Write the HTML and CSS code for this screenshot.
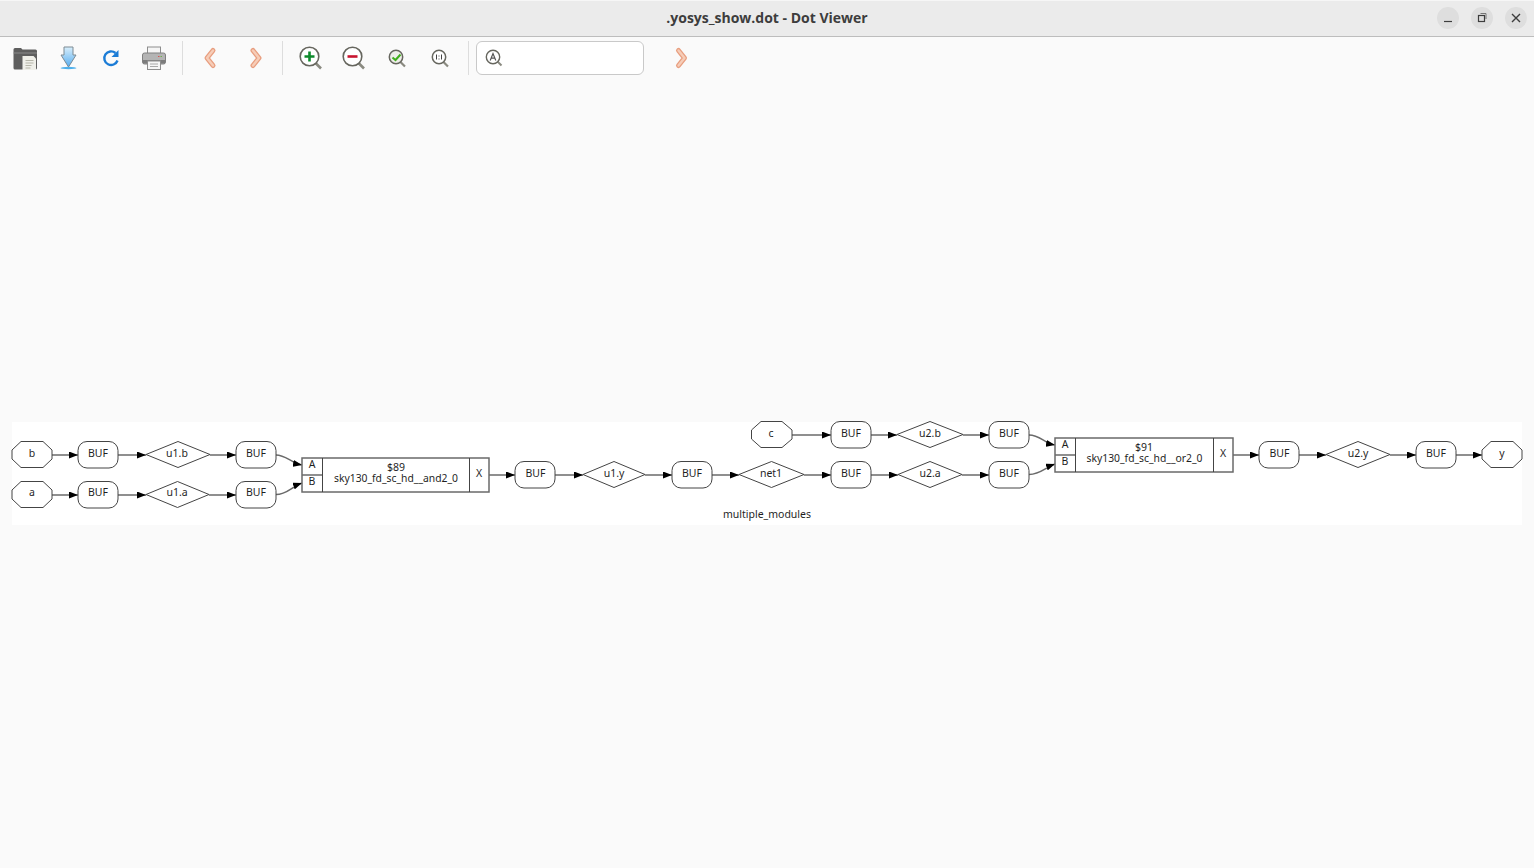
FILE: index.html
```html
<!DOCTYPE html>
<html lang="en">
<head>
    <meta charset="UTF-8">
    <title>.yosys_show.dot - Dot Viewer</title>
    <link rel="stylesheet" href="styles.css">
</head>
<body>
    <!-- Title bar -->
    <header class="titlebar">
        <div class="title">.yosys_show.dot - Dot Viewer</div>
        <div class="window-buttons">
            <button class="win-btn">
                <svg width="12" height="12" viewBox="0 0 12 12"><path d="M2 9.500h8" stroke="#3d3d3d" stroke-width="1.200"/></svg>
            </button>
            <button class="win-btn">
                <svg width="12" height="12" viewBox="0 0 12 12" fill="none"><rect x="2.500" y="3.500" width="6" height="6" stroke="#3d3d3d" stroke-width="1.200"/><path d="M4.500 1.500h5.500v5.500" stroke="#777" stroke-width="1"/></svg>
            </button>
            <button class="win-btn">
                <svg width="12" height="12" viewBox="0 0 12 12"><path d="M2 2l8 8M10 2l-8 8" stroke="#3d3d3d" stroke-width="1.400"/></svg>
            </button>
        </div>
    </header>

    <!-- Toolbar -->
    <div class="toolbar">
        <button class="tool">
            <svg width="24" height="24" viewBox="0 0 24 24">
                <path d="M0.500 3.500q0-1.500 1.500-1.500h6l1.500 1.500h13q1.500 0 1.500 1.500v17q0 1.500-1.500 1.500h-20.500q-1.500 0-1.500-1.500z" fill="#5e5e5e"/>
                <path d="M0.500 7h24" stroke="#8a8a8a" stroke-width="1"/>
                <path d="M9.500 10h11l2.500 2.500v11.500h-13.500z" fill="#efefe9"/>
                <path d="M12.500 14.500h8M12.500 17h8M12.500 19.500h6M12.500 22h5" stroke="#b5b5a8" stroke-width="1"/>
            </svg>
        </button>
        <button class="tool">
            <svg width="24" height="24" viewBox="0 0 24 24">
                <defs>
                    <linearGradient id="saveBlue" x1="0" y1="0" x2="0" y2="1">
                        <stop offset="0" stop-color="#d8eefb"/>
                        <stop offset="1" stop-color="#56adf0"/>
                    </linearGradient>
                </defs>
                <ellipse cx="12.500" cy="22" rx="8" ry="1.200" fill="#4fb0ec"/>
                <path d="M8 1h9v8h3l-7.500 12-7.500-12h3z" fill="url(#saveBlue)" stroke="#7d8b94" stroke-width="1"/>
            </svg>
        </button>
        <button class="tool">
            <svg width="24" height="24" viewBox="0 0 24 24" fill="none">
                <path d="M18.500 14.500a6.800 6.800 0 1 1-2-7.500" stroke="#1b7cd6" stroke-width="2.400"/>
                <path d="M19.500 4v7h-7z" fill="#1b7cd6"/>
            </svg>
        </button>
        <button class="tool">
            <svg width="24" height="24" viewBox="0 0 24 24">
                <rect x="5.500" y="1" width="13" height="8" fill="#f5f5f5" stroke="#8d8d8d"/>
                <rect x="0.500" y="7" width="23" height="11" rx="2" fill="#b4b4b4" stroke="#808080"/>
                <path d="M1 14h22v3.500H1z" fill="#7c7c7c"/>
                <path d="M16 10.500h1.500" stroke="#d9534f" stroke-width="1"/>
                <path d="M18.500 10.500h1.500" stroke="#6fae4c" stroke-width="1"/>
                <rect x="5.500" y="15" width="13" height="8.500" fill="#f5f5f5" stroke="#8d8d8d"/>
                <path d="M8 18h8M8 20.500h8" stroke="#a8a8a8" stroke-width="1"/>
            </svg>
        </button>
        <span class="sep"></span>
        <button class="tool tool-back">
            <svg width="24" height="24" viewBox="0 0 24 24" fill="none">
                <path d="M14 4.500l-6 7.500 6 7.500" stroke="#e89e7f" stroke-width="5" stroke-linecap="round" stroke-linejoin="round"/>
                <path d="M14 4.500l-6 7.500 6 7.500" stroke="#f6cdb8" stroke-width="2.400" stroke-linecap="round" stroke-linejoin="round"/>
            </svg>
        </button>
        <button class="tool">
            <svg width="24" height="24" viewBox="0 0 24 24" fill="none">
                <path d="M11 4.500l6 7.500-6 7.500" stroke="#e89e7f" stroke-width="5" stroke-linecap="round" stroke-linejoin="round"/>
                <path d="M11 4.500l6 7.500-6 7.500" stroke="#f6cdb8" stroke-width="2.400" stroke-linecap="round" stroke-linejoin="round"/>
            </svg>
        </button>
        <span class="sep sep-zoom"></span>
        <button class="tool">
            <svg width="24" height="24" viewBox="0 0 24 24" fill="none">
                <path d="M16.500 17l5.500 5.500" stroke="#8a8a80" stroke-width="2.600"/>
                <circle cx="10.500" cy="10.500" r="9.300" fill="#fff" stroke="#66665e" stroke-width="1.600"/>
                <path d="M10.500 5.500v10M5.500 10.500h10" stroke="#0e8a2c" stroke-width="2.600"/>
            </svg>
        </button>
        <button class="tool">
            <svg width="24" height="24" viewBox="0 0 24 24" fill="none">
                <path d="M16.500 17l5.500 5.500" stroke="#8a8a80" stroke-width="2.600"/>
                <circle cx="10.500" cy="10.500" r="9.300" fill="#fff" stroke="#66665e" stroke-width="1.600"/>
                <path d="M5.500 10.500h10" stroke="#c8142f" stroke-width="2.600"/>
            </svg>
        </button>
        <button class="tool">
            <svg width="24" height="24" viewBox="0 0 24 24" fill="none">
                <path d="M15.500 16l4.500 4.500" stroke="#8a8a80" stroke-width="2.200"/>
                <circle cx="11" cy="11" r="6.700" fill="#eeeee8" stroke="#66665e" stroke-width="1.500"/>
                <path d="M7.500 11.500l3 2.500 5-5.500" stroke="#3fae1c" stroke-width="2"/>
            </svg>
        </button>
        <button class="tool">
            <svg width="24" height="24" viewBox="0 0 24 24" fill="none">
                <path d="M15.500 16l4.500 4.500" stroke="#8a8a80" stroke-width="2.200"/>
                <circle cx="11" cy="11" r="6.700" fill="#fff" stroke="#66665e" stroke-width="1.500"/>
                <path d="M8.500 8.500v5M13.500 8.500v5M11 9.500v1M11 12.500v1" stroke="#444" stroke-width="1"/>
            </svg>
        </button>
        <span class="sep"></span>
        <div class="search">
            <svg width="18" height="18" viewBox="0 0 18 18" fill="none">
                <path d="M12.500 12.500l4 4" stroke="#8a8a80" stroke-width="2"/>
                <circle cx="8" cy="8" r="6.700" fill="#fff" stroke="#66665e" stroke-width="1.400"/>
                <path d="M5.200 11.500L8 4.500l2.800 7M6.200 9.200h3.600" stroke="#555" stroke-width="1.200"/>
            </svg>
        </div>
        <button class="tool tool-next">
            <svg width="24" height="24" viewBox="0 0 24 24" fill="none">
                <path d="M9.500 4.500l6 7.500-6 7.500" stroke="#e89e7f" stroke-width="5" stroke-linecap="round" stroke-linejoin="round"/>
                <path d="M9.500 4.500l6 7.500-6 7.500" stroke="#f6cdb8" stroke-width="2.400" stroke-linecap="round" stroke-linejoin="round"/>
            </svg>
        </button>
    </div>

    <!-- Graph -->
    <main class="canvas">
        <svg class="graph" width="1510" height="103" viewBox="12 422 1510 103">
            <defs>
                <marker id="head" markerUnits="userSpaceOnUse" markerWidth="9" markerHeight="7" refX="9" refY="3.500" orient="auto">
                    <path d="M0 0L9 3.500 0 7z" fill="#000"/>
                </marker>
            </defs>

            <!-- edges -->
            <g class="edges">
                <path d="M52 455H78"/>
                <path d="M118 455H146"/>
                <path d="M210 455H236"/>
                <path d="M276 455C286 455 291 463 302 465"/>
                <path d="M52 495H78"/>
                <path d="M118 495H146"/>
                <path d="M209 495H236"/>
                <path d="M276 494.500C287 494.500 291 487 302 483"/>
                <path d="M489 475H515"/>
                <path d="M555 475H583"/>
                <path d="M645 475H672"/>
                <path d="M712 475H739"/>
                <path d="M804 475H831"/>
                <path d="M871 475H898"/>
                <path d="M962 475H989"/>
                <path d="M1029 474.500C1041 474 1044 468 1055 464"/>
                <path d="M792 435H831"/>
                <path d="M871 435H897"/>
                <path d="M963 435H989"/>
                <path d="M1029 435C1040 435 1044 443 1055 445"/>
                <path d="M1233 455H1259"/>
                <path d="M1299 455H1326"/>
                <path d="M1390 455H1416"/>
                <path d="M1456 455H1482"/>
            </g>

            <!-- ports -->
            <g class="nodes">
                <polygon points="12,450 21,441.500 43,441.500 52,450 52,459 43,467.500 21,467.500 12,459"/>
                <polygon points="12,490 21,481.500 43,481.500 52,490 52,499 43,507.500 21,507.500 12,499"/>
                <polygon points="751.500,430 761,421.500 782,421.500 792,430 792,439 782,447.500 761,447.500 751.500,439"/>
                <polygon points="1482,450 1491,441.500 1513,441.500 1522,450 1522,459 1513,467.500 1491,467.500 1482,459"/>

                <!-- buffers -->
                <rect x="78" y="441.500" width="40" height="26.500" rx="9"/>
                <rect x="236" y="441.500" width="40" height="26.500" rx="9"/>
                <rect x="78" y="481.500" width="40" height="26.500" rx="9"/>
                <rect x="236" y="481.500" width="40" height="26.500" rx="9"/>
                <rect x="515" y="461.500" width="40" height="26.500" rx="9"/>
                <rect x="672" y="461.500" width="40" height="26.500" rx="9"/>
                <rect x="831" y="421.500" width="40" height="26.500" rx="9"/>
                <rect x="831" y="461.500" width="40" height="26.500" rx="9"/>
                <rect x="989" y="421.500" width="40" height="26.500" rx="9"/>
                <rect x="989" y="461.500" width="40" height="26.500" rx="9"/>
                <rect x="1259" y="441.500" width="40" height="26.500" rx="9"/>
                <rect x="1416" y="441.500" width="40" height="26.500" rx="9"/>

                <!-- wires -->
                <polygon points="146,454.500 178,441.500 210,454.500 178,467.500"/>
                <polygon points="146,494.500 177.500,481.500 209,494.500 177.500,507.500"/>
                <polygon points="583,474.500 614,461.500 645,474.500 614,487.500"/>
                <polygon points="739,474.500 771.500,461.500 804,474.500 771.500,487.500"/>
                <polygon points="897,434.500 930,421.500 963,434.500 930,447.500"/>
                <polygon points="898,474.500 930,461.500 962,474.500 930,487.500"/>
                <polygon points="1326,454.500 1358,441.500 1390,454.500 1358,467.500"/>
            </g>

            <!-- cells -->
            <g class="cell">
                <rect x="302" y="458" width="187" height="34"/>
                <path d="M302 475H322.500"/>
                <path class="divider" d="M322.500 458V492M469.500 458V492"/>
                <rect x="1055" y="438" width="178" height="34"/>
                <path d="M1055 455H1075.500"/>
                <path class="divider" d="M1075.500 438V472M1213.500 438V472"/>
            </g>

            <g class="labels">
                <text x="32" y="457">b</text>
                <text x="32" y="496">a</text>
                <text x="771" y="437">c</text>
                <text x="1502" y="457">y</text>
                <text x="98" y="457">BUF</text>
                <text x="256" y="457">BUF</text>
                <text x="98" y="496">BUF</text>
                <text x="256" y="496">BUF</text>
                <text x="535.500" y="477">BUF</text>
                <text x="692" y="477">BUF</text>
                <text x="851" y="437">BUF</text>
                <text x="851" y="477">BUF</text>
                <text x="1009" y="437">BUF</text>
                <text x="1009" y="477">BUF</text>
                <text x="1279.500" y="457">BUF</text>
                <text x="1436" y="457">BUF</text>
                <text x="177" y="457">u1.b</text>
                <text x="177" y="496">u1.a</text>
                <text x="614" y="477">u1.y</text>
                <text x="771" y="477">net1</text>
                <text x="930" y="437">u2.b</text>
                <text x="930" y="477">u2.a</text>
                <text x="1358" y="457">u2.y</text>
                <text x="312" y="468">A</text>
                <text x="312" y="485">B</text>
                <text x="396" y="471">$89</text>
                <text class="cell-name" x="396" y="482">sky130_fd_sc_hd__and2_0</text>
                <text x="479" y="477">X</text>
                <text x="1065" y="448">A</text>
                <text x="1065" y="465">B</text>
                <text x="1144" y="451">$91</text>
                <text class="cell-name" x="1144.500" y="462">sky130_fd_sc_hd__or2_0</text>
                <text x="1223" y="457">X</text>
                <text x="767" y="518">multiple_modules</text>
            </g>
        </svg>
    </main>
</body>
</html>
```

FILE: styles.css
```css
* {
    box-sizing: border-box;
}

html, body {
    height: 100%;
}

body {
    margin: 0;
    display: flex;
    flex-direction: column;
    background-color: #FAFAFA;
    font-family: "Open Sans", "Noto Sans", sans-serif;
    color: #3D3D3D;
    overflow: hidden;
}

button {
    border: none;
    background: none;
    padding: 0;
    display: flex;
    align-items: center;
    justify-content: center;
}

/* Title bar */
.titlebar {
    position: relative;
    flex: none;
    height: 37px;
    padding-bottom: 2px;
    background-color: #EBEBEB;
    border-top: 1px solid #F6F6F6;
    border-bottom: 1px solid #BDBDBD;
    display: flex;
    align-items: center;
    justify-content: center;
}

.title {
    font-size: 14px;
    font-weight: bold;
}

.window-buttons {
    position: absolute;
    top: 6px;
    right: 7px;
    display: flex;
    gap: 12px;
}

.win-btn {
    width: 22px;
    height: 22px;
    border-radius: 50%;
    background-color: #DEDEDE;
}

/* Toolbar */
.toolbar {
    flex: none;
    height: 42px;
    padding-left: 3px;
    display: flex;
    align-items: center;
}

.tool {
    width: 43px;
    height: 34px;
}

.tool-back {
    margin-left: -1px;
}

.sep {
    width: 1px;
    height: 34px;
    margin: 0 7px;
    background-color: #DDDDDD;
}

.sep-zoom {
    margin-right: 6px;
}

.search {
    width: 168px;
    height: 34px;
    padding-left: 8px;
    background-color: #FFFFFF;
    border: 1px solid #C9C9C9;
    border-radius: 6px;
    display: flex;
    align-items: center;
}

.tool-next {
    margin-left: 15px;
}

/* Graph */
.canvas {
    flex: 1;
    display: flex;
    align-items: center;
    justify-content: center;
}

.graph {
    display: block;
    background-color: #FFFFFF;
    overflow: visible;
}

.edges path {
    fill: none;
    stroke: #6A6A6A;
    stroke-width: 1.500;
    marker-end: url(#head);
}

.nodes polygon,
.nodes rect {
    fill: #FFFFFF;
    stroke: #444444;
    stroke-width: 1;
}

.cell rect,
.cell path {
    fill: none;
    stroke: #6A6A6A;
    stroke-width: 1.500;
}

.cell .divider {
    stroke: #444444;
    stroke-width: 1;
}

.labels text {
    font-family: "Noto Sans", sans-serif;
    font-size: 10.500px;
    fill: #1F1F1F;
    text-anchor: middle;
}

.labels .cell-name {
    font-size: 10.350px;
}
```
